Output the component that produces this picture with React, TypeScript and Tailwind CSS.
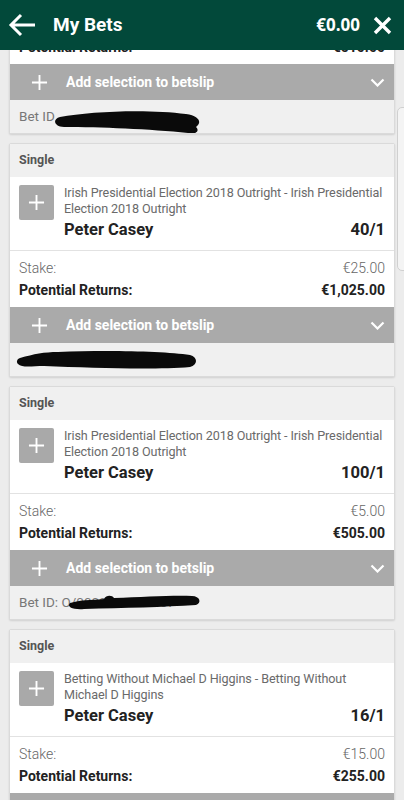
type Bet = {
  market: string
  pick: string
  odds: string
  stake: string
  returns: string
  scribble: 'a' | 'b' | 'c'
}

const bets: Bet[] = [
  {
    market: 'Irish Presidential Election 2018 Outright - Irish Presidential Election 2018 Outright',
    pick: 'Peter Casey',
    odds: '50/1',
    stake: '€10.00',
    returns: '€510.00',
    scribble: 'a',
  },
  {
    market: 'Irish Presidential Election 2018 Outright - Irish Presidential Election 2018 Outright',
    pick: 'Peter Casey',
    odds: '40/1',
    stake: '€25.00',
    returns: '€1,025.00',
    scribble: 'b',
  },
  {
    market: 'Irish Presidential Election 2018 Outright - Irish Presidential Election 2018 Outright',
    pick: 'Peter Casey',
    odds: '100/1',
    stake: '€5.00',
    returns: '€505.00',
    scribble: 'c',
  },
  {
    market: 'Betting Without Michael D Higgins - Betting Without Michael D Higgins',
    pick: 'Peter Casey',
    odds: '16/1',
    stake: '€15.00',
    returns: '€255.00',
    scribble: 'c',
  },
]

function PlusIcon({ size = 18 }: { size?: number }) {
  return (
    <svg width={size} height={size} viewBox="0 0 18 18" fill="none">
      <path d="M9 1v16M1 9h16" stroke="white" strokeWidth="2" />
    </svg>
  )
}

function BetIdRow({ kind }: { kind: Bet['scribble'] }) {
  if (kind === 'a') {
    return (
      <div className="relative h-[33px] bg-[#f0f0f0] flex items-center px-[9px] text-[13.5px] text-[#777]">
        Bet ID
        <svg className="absolute left-[40px] top-[5px]" width="160" height="32" viewBox="0 0 160 32">
          <path d="M10 12 C40 6 100 4 136 9 C150 11 152 18 146 22 C150 26 146 30 138 28 C100 24 50 22 14 22 C4 22 2 14 10 12 Z" fill="#0a0a0a" />
        </svg>
      </div>
    )
  }
  if (kind === 'b') {
    return (
      <div className="relative h-[33px] bg-[#f0f0f0]">
        <svg className="absolute left-[4px] top-[3px]" width="186" height="26" viewBox="0 0 186 26">
          <path d="M6 12 C20 8 30 6 44 6 C90 4 150 5 176 9 C184 11 184 19 176 21 C140 24 80 22 30 20 C18 20 8 22 4 18 C2 16 3 13 6 12 Z" fill="#0a0a0a" />
        </svg>
      </div>
    )
  }
  return (
    <div className="relative h-[33px] bg-[#f0f0f0] flex items-center px-[9px] text-[13.5px] text-[#777]">
      Bet ID: O/0000000005567
      <svg className="absolute left-[54px] top-[5px]" width="140" height="24" viewBox="0 0 140 24">
        <path d="M6 12 C20 8 34 9 40 8 C42 4 48 4 50 7 C80 6 110 4 128 5 C136 5 138 12 132 14 C100 16 60 17 20 18 C10 19 2 16 6 12 Z" fill="#0a0a0a" />
      </svg>
    </div>
  )
}

function BetCard({ bet, first }: { bet: Bet; first?: boolean }) {
  return (
    <div className={`shrink-0 rounded-[2px] border border-[#dadada] bg-white shadow-[0_1px_2px_rgba(0,0,0,0.12)] overflow-hidden ${first ? '-mt-[150px]' : ''}`}>
      <div className="h-[33px] bg-[#f0f0f0] flex items-center px-[9px] text-[12.5px] font-bold text-[#555]">
        Single
      </div>
      <div className="h-[74px] flex gap-[10px] pl-[9px] pr-[9px] pt-[8px] border-b border-[#e2e2e2]">
        <div className="w-[35px] h-[35px] shrink-0 rounded-[2px] bg-[#a9a9a9] flex items-center justify-center">
          <PlusIcon size={17} />
        </div>
        <div className="flex-1 min-w-0">
          <div className="text-[12.6px] leading-[16px] text-[#6a6a6a] h-[32px] tracking-[-0.1px]">{bet.market}</div>
          <div className="flex items-center justify-between mt-[1px]">
            <span className="text-[16.5px] font-bold text-[#222]">{bet.pick}</span>
            <span className="text-[16.5px] font-bold text-[#222]">{bet.odds}</span>
          </div>
        </div>
      </div>
      <div className="h-[56px] px-[9px] pt-[6px] text-[14px]">
        <div className="flex justify-between h-[22px] items-center text-[#666] font-light">
          <span>Stake:</span>
          <span>{bet.stake}</span>
        </div>
        <div className="flex justify-between h-[22px] items-center font-bold text-[#222]">
          <span>Potential Returns:</span>
          <span>{bet.returns}</span>
        </div>
      </div>
      <div className="h-[36px] bg-[#aaaaaa] flex items-center pl-[21px] pr-[9px] text-white">
        <PlusIcon size={17} />
        <span className="ml-[18px] text-[14px] font-bold flex-1">Add selection to betslip</span>
        <svg width="15" height="9" viewBox="0 0 15 9" fill="none">
          <path d="M1.5 1.5l6 6 6-6" stroke="white" strokeWidth="2.2" />
        </svg>
      </div>
      <BetIdRow kind={bet.scribble} />
    </div>
  )
}

export default function App() {
  return (
    <div className="relative h-[800px] w-[404px] overflow-hidden bg-[#ececec] flex flex-col" style={{ fontFamily: 'Roboto, "Liberation Sans", sans-serif' }}>
      <div className="relative z-10 h-[50px] shrink-0 bg-[#02493a] flex items-center px-[8px] text-white">
        <svg width="28" height="24" viewBox="0 0 28 24" fill="none">
          <path d="M27 12H3M13 2L3 12l10 10" stroke="white" strokeWidth="3" />
        </svg>
        <span className="ml-[17px] text-[19px] font-bold flex-1">My Bets</span>
        <span className="text-[17px] font-bold" style={{ fontFamily: '"Open Sans", Roboto, sans-serif' }}>€0.00</span>
        <svg className="ml-[13px] mr-[4px]" width="19" height="19" viewBox="0 0 19 19" fill="none">
          <path d="M2 2l15 15M17 2L2 17" stroke="white" strokeWidth="3.4" />
        </svg>
      </div>
      <div className="flex-1 flex flex-col gap-[9px] px-[9px] overflow-hidden">
        {bets.map((b, i) => (
          <BetCard key={i} bet={b} first={i === 0} />
        ))}
      </div>
      <div className="absolute left-[397px] top-[107px] w-[14px] h-[164px] rounded-[5px] border border-[#d0d0d0] bg-[#f4f4f4]" />
    </div>
  )
}
